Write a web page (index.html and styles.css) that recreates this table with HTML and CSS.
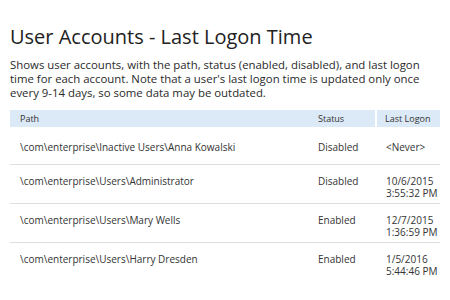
FILE: index.html
```html
<!DOCTYPE html>
<html>
<head>
<meta charset="utf-8">
<link rel="stylesheet" href="styles.css">
</head>
<body>
<div class="page">
  <h1 class="title">User Accounts - Last Logon Time</h1>
  <p class="desc">Shows user accounts, with the path, status (enabled, disabled), and last logon time for each account. Note that a user's last logon time is updated only once every 9-14 days, so some data may be outdated.</p>
  <table class="grid">
    <colgroup>
      <col class="c-path">
      <col class="c-status">
      <col class="c-logon">
    </colgroup>
    <thead>
      <tr>
        <th>Path</th>
        <th>Status</th>
        <th class="sep">Last Logon</th>
      </tr>
    </thead>
    <tbody>
      <tr class="first">
        <td>\com\enterprise\Inactive Users\Anna Kowalski</td>
        <td>Disabled</td>
        <td>&lt;Never&gt;</td>
      </tr>
      <tr>
        <td>\com\enterprise\Users\Administrator</td>
        <td>Disabled</td>
        <td>10/6/2015<br>3:55:32 PM</td>
      </tr>
      <tr>
        <td>\com\enterprise\Users\Mary Wells</td>
        <td>Enabled</td>
        <td>12/7/2015<br>1:36:59 PM</td>
      </tr>
      <tr class="last">
        <td>\com\enterprise\Users\Harry Dresden</td>
        <td>Enabled</td>
        <td>1/5/2016<br>5:44:46 PM</td>
      </tr>
    </tbody>
  </table>
</div>
</body>
</html>
```
FILE: styles.css
```css
html, body {
  margin: 0;
  padding: 0;
  background: #ffffff;
}
body {
  font-family: "Open Sans", "Noto Sans", sans-serif;
  color: #333333;
}
.page {
  padding: 23px 10px 0 10px;
}
.title {
  margin: 0;
  font-size: 20px;
  font-weight: 400;
  line-height: 27px;
  color: #222222;
}
.desc {
  margin: 8px 0 0 0;
  font-size: 11.4px;
  line-height: 14px;
  color: #2a2a2a;
}
.grid {
  margin-top: 10px;
  width: 430px;
  border-collapse: collapse;
  table-layout: fixed;
  font-size: 10px;
}
.c-path { width: 298px; }
.c-status { width: 68px; }
.c-logon { width: 64px; }
.grid th {
  background: #dce9f6;
  font-weight: 400;
  font-size: 9px;
  text-align: left;
  height: 17px;
  padding: 0 0 0 10px;
  color: #333;
}
.grid th.sep {
  border-left: 2px solid #ffffff;
  padding-left: 8px;
}
.grid td {
  height: 39px;
  box-sizing: border-box;
  padding: 10px 0 0 10px;
  line-height: 12.5px;
  vertical-align: top;
  border-bottom: 1px solid #dedede;
  color: #333;
}
.grid tr.first td {
  height: 37px;
  padding-top: 14px;
}
.grid tr.last td {
  border-bottom: none;
}
```
